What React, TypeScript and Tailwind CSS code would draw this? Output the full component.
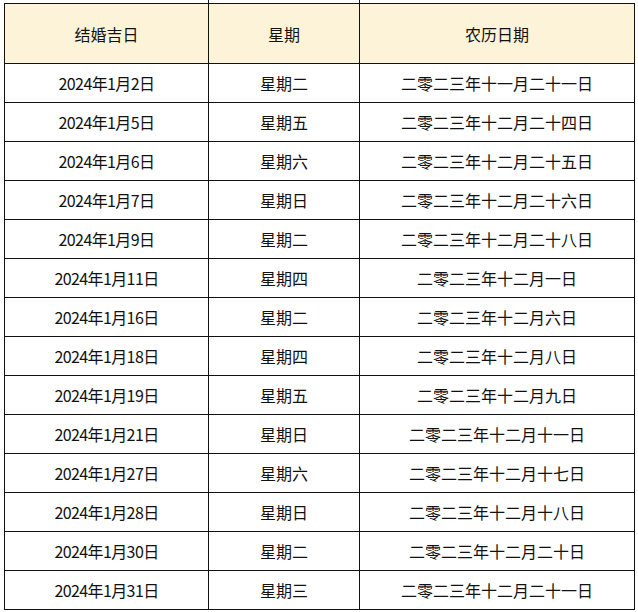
const rows: [string, string, string][] = [
  ['2024年1月2日', '星期二', '二零二三年十一月二十一日'],
  ['2024年1月5日', '星期五', '二零二三年十二月二十四日'],
  ['2024年1月6日', '星期六', '二零二三年十二月二十五日'],
  ['2024年1月7日', '星期日', '二零二三年十二月二十六日'],
  ['2024年1月9日', '星期二', '二零二三年十二月二十八日'],
  ['2024年1月11日', '星期四', '二零二三年十二月一日'],
  ['2024年1月16日', '星期二', '二零二三年十二月六日'],
  ['2024年1月18日', '星期四', '二零二三年十二月八日'],
  ['2024年1月19日', '星期五', '二零二三年十二月九日'],
  ['2024年1月21日', '星期日', '二零二三年十二月十一日'],
  ['2024年1月27日', '星期六', '二零二三年十二月十七日'],
  ['2024年1月28日', '星期日', '二零二三年十二月十八日'],
  ['2024年1月30日', '星期二', '二零二三年十二月二十日'],
  ['2024年1月31日', '星期三', '二零二三年十二月二十一日'],
];

const cell = 'flex items-center justify-center border-r border-b border-[#111]';

export default function App() {
  return (
    <div
      className="h-[612px] w-[638px] overflow-hidden bg-white text-[16px] text-[#111]"
      style={{ fontFamily: '"Noto Sans CJK SC", "Liberation Sans", sans-serif' }}
    >
      {/* tail of the rows above */}
      <div className="ml-[4px] grid h-[3px] grid-cols-[205px_151px_275px]">
        <div className="border-r border-[#111]" />
        <div className="border-r border-[#111]" />
        <div />
      </div>
      <div className="ml-[4px] grid w-[631px] grid-cols-[204px_151px_275px] border-t border-l border-[#111]">
        {['结婚吉日', '星期', '农历日期'].map((h) => (
          <div key={h} className={`${cell} h-[60px] bg-[#fdf3d8]`}>
            {h}
          </div>
        ))}
        {rows.map((r) =>
          r.map((v, i) => (
            <div key={r[0] + i} className={`${cell} h-[39px] ${i === 0 ? 'tracking-[-0.6px]' : ''}`}>
              {v}
            </div>
          )),
        )}
      </div>
    </div>
  );
}
